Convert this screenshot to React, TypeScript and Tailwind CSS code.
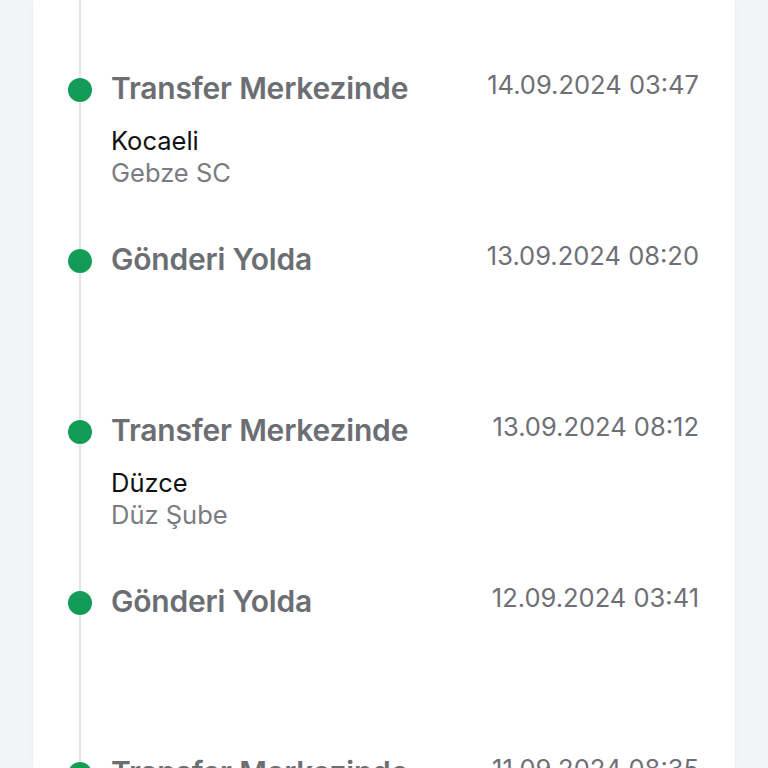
const events = [
  { title: 'Transfer Merkezinde', date: '14.09.2024 03:47', city: 'Kocaeli', branch: 'Gebze SC' },
  { title: 'Gönderi Yolda', date: '13.09.2024 08:20' },
  { title: 'Transfer Merkezinde', date: '13.09.2024 08:12', city: 'Düzce', branch: 'Düz Şube' },
  { title: 'Gönderi Yolda', date: '12.09.2024 03:41' },
  { title: 'Transfer Merkezinde', date: '11.09.2024 08:35' }
];

export default function App() {
  return (
    <div
      className="min-h-screen h-[768px] overflow-hidden bg-[#f3f4f6] px-[33px]"
      style={{ fontFamily: 'Inter, "Noto Sans", sans-serif' }}
    >
      <div className="bg-white h-full pl-[46px] pr-[36px] shadow-[0_0_4px_rgba(0,0,0,0.04)]">
        <div className="border-l-2 border-[#e4e4e7] h-full pl-[30px]">
          <div className="h-[70px]" />
          {events.map((ev, i) => (
            <div key={i} className="relative h-[171px]">
              <span className="absolute left-[-43px] top-[8px] w-6 h-6 rounded-full bg-[#129c55]" />
              <div className="flex items-start justify-between">
                <div className="text-[30px] leading-9 font-semibold text-[#6b6e73] tracking-[-0.2px]">{ev.title}</div>
                <div className="text-[25.5px] leading-[30px] text-[#6e7076]">{ev.date}</div>
              </div>
              {ev.city && (
                <div className="mt-[19px] text-[25.5px] leading-8">
                  <div className="text-[#111]">{ev.city}</div>
                  <div className="text-[#7a7c80]">{ev.branch}</div>
                </div>
              )}
            </div>
          ))}
        </div>
      </div>
    </div>
  );
}
